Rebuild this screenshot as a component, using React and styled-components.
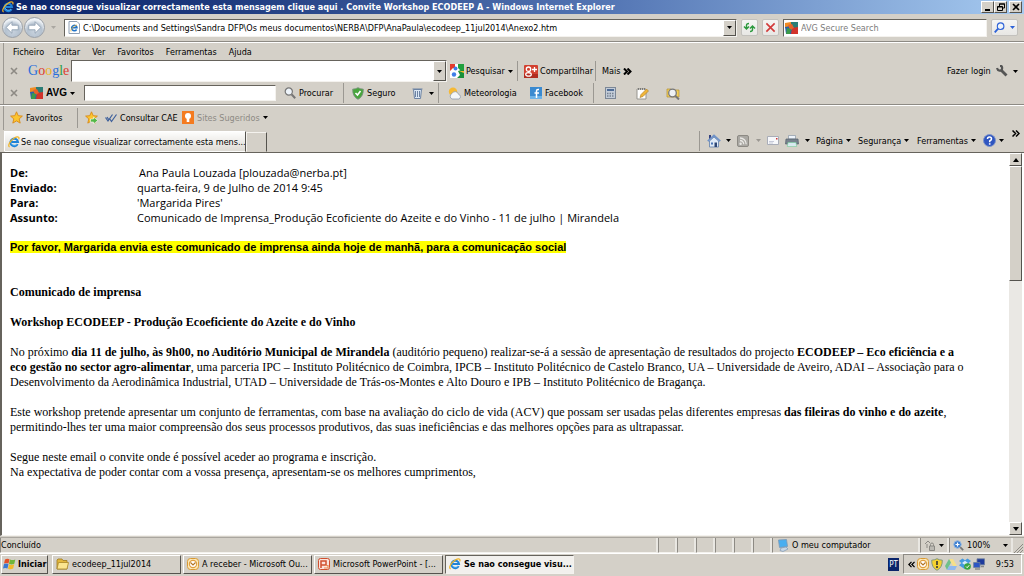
import React from "react";
import styled, { createGlobalStyle, css } from "styled-components";

const Global = createGlobalStyle`
  *, *::before, *::after { box-sizing: border-box; }
  html, body { margin: 0; padding: 0; }
  body {
    background: #d4d0c8;
    color: #000;
    font-family: "DejaVu Sans Condensed", "DejaVu Sans", sans-serif;
    font-size: 9px;
    line-height: 12px;
  }
  button, input { font: inherit; color: inherit; margin: 0; }
  p, h1, h2, dl, dd { margin: 0; }
  svg { display: block; flex: none; }
`;

const raised = css`
  border: 1px solid;
  border-color: #fff #55534e #55534e #fff;
`;
const sunken = css`
  border: 1px solid;
  border-color: #66635c #f4f2ee #f4f2ee #66635c;
`;

const Window = styled.div`
  display: flex;
  flex-direction: column;
  min-height: 100vh;
  background: #d4d0c8;
`;

const TitleBar = styled.header`
  display: flex;
  align-items: center;
  gap: 2px;
  height: 14px;
  padding: 0 2px;
  background: linear-gradient(90deg, #0a246a 0%, #1c387c 20%, #5577b5 60%, #a6caf0 100%);
  color: #fff;
`;
const Title = styled.h1`
  flex: 1;
  min-width: 0;
  font-size: 9px;
  line-height: 14px;
  font-weight: bold;
  white-space: nowrap;
  overflow: hidden;
`;
const WindowButtons = styled.div`
  display: flex;
  button:last-child { margin-left: 2px; }
`;
const WindowButton = styled.button`
  ${raised}
  display: grid;
  place-items: center;
  width: 13px;
  height: 12px;
  padding: 0;
  background: #d4d0c8;
`;

const AddressRow = styled.div`
  display: flex;
  align-items: center;
  gap: 4px;
  height: 28px;
  padding: 0 6px 0 2px;
  border-bottom: 1px solid #8d8a84;
`;
const Nav = styled.div`
  display: flex;
  align-items: center;
  width: 58px;
  gap: 1px;
`;
const NavButton = styled.button`
  display: grid;
  place-items: center;
  width: 21px;
  height: 21px;
  padding: 0;
  border: 1px solid #9aa0a8;
  border-radius: 50%;
  background: radial-gradient(circle at 50% 70%, #c9d3de 0, #b4c1cf 45%, #eef2f6 70%);
`;
const AddressBox = styled.div`
  ${sunken}
  display: flex;
  align-items: center;
  flex: 1;
  min-width: 0;
  height: 18px;
  padding-left: 3px;
  background: #fff;
`;
const PlainInput = styled.input`
  flex: 1;
  min-width: 0;
  height: 100%;
  padding: 0 0 0 3px;
  border: 0;
  outline: 0;
  background: transparent;
  &::placeholder { color: #7b7b7b; opacity: 1; }
`;
const DropButton = styled.button`
  ${raised}
  display: grid;
  place-items: center;
  align-self: stretch;
  width: 13px;
  padding: 0;
  background: #d4d0c8;
`;
const SmallButton = styled.button`
  display: flex;
  align-items: center;
  justify-content: space-around;
  width: ${(p) => p.$w || 17}px;
  height: 17px;
  padding: 0;
  border: 1px solid #c3c1bd;
  border-radius: 2px;
  background: linear-gradient(#f5f5f4, #e8e7e4);
`;
const SearchBox = styled(AddressBox)`
  flex: 0 0 204px;
  padding-left: 1px;
`;
const GoogleBox = styled(AddressBox)`
  flex: 0 0 376px;
  height: 22px;
  margin-right: 3px;
  padding-left: 0;
`;

const MenuRow = styled.nav`
  display: flex;
  align-items: center;
  gap: 12px;
  height: 18px;
  padding-left: 13px;
  border-top: 1px solid #fff;
  box-shadow: inset 3px 0 #d4d0c8, inset 4px 0 #9b9892;
`;
const MenuButton = styled.button`
  padding: 0;
  border: 0;
  background: none;
`;

const Toolbar = styled.div`
  display: flex;
  align-items: center;
  height: 22px;
  padding: 0 6px 0 10px;
  box-shadow: inset 3px 0 #d4d0c8, inset 4px 0 #9b9892;
`;
const Tool = styled.button`
  display: flex;
  align-items: center;
  flex: none;
  gap: ${(p) => p.$gap || 3}px;
  width: ${(p) => p.$w}px;
  padding: 0;
  border: 0;
  background: none;
  color: ${(p) => p.$color || "#000"};
  white-space: nowrap;
  > svg:last-child:not(:first-child) { margin-left: auto; }
`;
const Divider = styled.span`
  flex: none;
  width: 1px;
  height: 20px;
  margin: 0 ${(p) => p.$after || 7}px 0 ${(p) => p.$before || 5}px;
  background: #9b9892;
`;
const Push = styled.span`
  flex: 1;
`;
const Logo = styled.span`
  width: 43px;
  font: 14px/20px "Liberation Serif", serif;
`;
const Letter = styled.span`
  color: ${(p) => p.$c};
`;
const ToolInput = styled.input`
  ${sunken}
  width: 192px;
  height: 16px;
  margin: 0 8px 0 9px;
  padding: 0 3px;
  background: #fff;
  border-radius: 0;
  outline: 0;
`;
const AvgName = styled.b`
  font: bold 10px/12px "Liberation Sans", sans-serif;
`;
const FavoritesBar = styled(Toolbar)`
  height: 26px;
  border-top: 1px solid #8d8a84;
  box-shadow: inset 0 1px #fff, inset 3px 0 #d4d0c8, inset 4px 0 #9b9892;
`;

const TabRow = styled.div`
  display: flex;
  align-items: flex-end;
  height: 23px;
  padding: 0 3px 0 4px;
  border-bottom: 1px solid #66635c;
`;
const Tab = styled.button`
  display: flex;
  align-items: center;
  gap: 1px;
  width: 242px;
  height: 21px;
  padding: 0 0 0 3px;
  border: 1px solid;
  border-color: #fff #55534e transparent #fff;
  background: linear-gradient(#fdfdfc, #dedbd5);
  white-space: nowrap;
`;
const NewTab = styled.button`
  width: 21px;
  height: 20px;
  padding: 0;
  border: 1px solid;
  border-color: #f4f2ee #55534e transparent #f4f2ee;
  background: #d4d0c8;
`;
const CommandBar = styled.div`
  display: flex;
  align-items: center;
  gap: 6px;
  height: 23px;
`;
const More = styled(Tool)`
  align-self: flex-start;
  margin-left: 9px;
`;

const View = styled.div`
  display: flex;
  flex: 1;
  padding-right: 2px;
  background: #fff;
  border-left: 2px solid #66635c;
  border-bottom: 1px solid #f4f2ee;
`;
const Page = styled.main`
  flex: 1;
  min-width: 0;
  padding: 12px 36px 20px 8px;
  font-family: "Liberation Serif", serif;
  font-size: 12px;
  line-height: 15px;
`;
const Fields = styled.dl`
  display: grid;
  grid-template-columns: 127px 1fr;
  font-family: "Open Sans", sans-serif;
  font-size: 11px;
  dt { font-weight: bold; }
  dd:first-of-type { padding-left: 2px; }
`;
const Note = styled.p`
  padding-top: 15px;
  font-family: "Liberation Sans", sans-serif;
  font-size: 11px;
  font-weight: bold;
  mark {
    padding: 0;
    background: #ff0;
    color: inherit;
  }
`;
const Heading = styled.h2`
  padding-top: ${(p) => p.$top || 15}px;
  font-size: 12px;
  font-weight: bold;
`;
const Para = styled.p`
  padding-top: 15px;
`;
const Scrollbar = styled.div`
  display: flex;
  flex-direction: column;
  width: 13px;
  background: #eae8e4;
`;
const ScrollButton = styled.button`
  ${raised}
  display: grid;
  place-items: center;
  height: 13px;
  padding: 0;
  background: #d4d0c8;
`;
const Thumb = styled.div`
  ${raised}
  flex: 32;
  background: #d4d0c8;
`;
const Track = styled.div`
  flex: 68;
`;

const StatusBar = styled.footer`
  display: flex;
  height: 16px;
  margin-top: 1px;
  border-top: 1px solid #aaa69f;
`;
const Cell = styled.div`
  display: flex;
  align-items: center;
  gap: 3px;
  flex: ${(p) => (p.$w ? `0 0 ${p.$w}px` : "1")};
  padding-left: ${(p) => p.$pad || 0}px;
  border-left: 1px solid #8d8a84;
  border-right: 2px solid #e9e7e2;
  border-bottom: 1px solid #f4f2ee;
  white-space: nowrap;
  > svg:last-child:not(:first-child) { margin: 0 3px 0 auto; }
`;
const Grip = styled.div`
  display: flex;
  align-items: flex-end;
  width: 11px;
`;

const TaskBar = styled.nav`
  display: flex;
  align-items: center;
  gap: 2px;
  height: 23px;
  padding: 0 2px 2px 1px;
  border-top: 1px solid #fff;
`;
const Task = styled.button`
  ${(p) => (p.$active ? sunken : raised)}
  display: flex;
  align-items: center;
  gap: 3px;
  flex: 0 1 129px;
  min-width: 0;
  height: 19px;
  padding: 0 3px;
  background: ${(p) => (p.$active ? "#f2f0ed" : "#d4d0c8")};
  font-weight: ${(p) => (p.$active ? "bold" : "normal")};
  white-space: nowrap;
  overflow: hidden;
`;
const StartButton = styled(Task)`
  flex: 0 0 47px;
  gap: 2px;
  margin-right: 2px;
  padding: 0 1px;
  font-weight: bold;
`;
const Lang = styled.span`
  width: 11px;
  height: 13px;
  margin-right: 2px;
  background: #0a246a;
  color: #fff;
  text-align: center;
  line-height: 13px;
  font-size: 8px;
`;
const Tray = styled.div`
  ${sunken}
  display: flex;
  align-items: center;
  gap: 2px;
  width: 119px;
  height: 20px;
  padding: 0 7px 0 4px;
  border-color: #8d8a84 #fff #fff #8d8a84;
  time { margin-left: auto; }
`;

const Caret = ({ color = "#000" }) => (
  <svg width="5" height="3" viewBox="0 0 5 3">
    <path d="M0 0h5L2.5 3z" fill={color} />
  </svg>
);
const IE = () => (
  <svg width="12" height="12" viewBox="0 0 16 16" fill="none">
    <path d="M12.8 10.8A5 5 0 1 1 13.3 8H5" stroke="#1f83d8" strokeWidth="2.8" />
    <path d="M12 10.6A4.6 4.6 0 0 1 4 9" stroke="#6bc4f5" strokeWidth="1" />
    <path d="M2.2 14.8C-1 13 3 6 8 3s8-2 6.2 1.5" stroke="#f0b323" strokeWidth="1.6" />
  </svg>
);
const PageIE = () => (
  <svg width="12" height="13" viewBox="0 0 12 13" fill="none">
    <path d="M1 .5h8l2.5 2.5v9.5H1z" fill="#fff" stroke="#8fa0b4" />
    <path d="M8.6 8.5A2.7 2.7 0 1 1 9 6.800H4" stroke="#1f73c8" strokeWidth="1.5" />
    <path d="M3 10.5C2 9 5 5 9 4" stroke="#f0b323" strokeWidth=".7" />
  </svg>
);
const Arrow = ({ flip }) => (
  <svg width="15" height="15" viewBox="0 0 13 13">
    <path
      d={flip ? "M12 6.500L7 1.500v3H1.500v4H7v3z" : "M1 6.500l5-5v3h5.500v4H6v3z"}
      fill="#fff"
      stroke="#93a3b4"
      strokeWidth=".8"
    />
  </svg>
);
const Cross = ({ color, s = 8, w = 1.6 }) => (
  <svg width={s} height={s} viewBox="0 0 8 8">
    <path d="M1 1l6 6M7 1L1 7" stroke={color} strokeWidth={w} />
  </svg>
);
const Refresh = () => (
  <svg width="13" height="13" viewBox="0 0 13 13" fill="none" stroke="#2c9a3e" strokeWidth="1.4">
    <path d="M3.500 7.500V4.500Q3.500 2.500 6 2.500M1 5.500L3.500 8 6 5.500M9.500 5.500v3Q9.500 10.500 7 10.500M7 7.500L9.500 5 12 7.500" />
  </svg>
);
const Magnifier = ({ color = "#777", s = 12, left }) => (
  <svg width={s} height={s} viewBox="0 0 12 12" fill="none" stroke={color}>
    <g transform={left ? "translate(12 0) scale(-1 1)" : undefined}>
      <circle cx="4.8" cy="4.5" r="3.6" fill="#eef4fa" strokeWidth="1.2" />
      <path d="M7.500 7.200l3.700 4" strokeWidth="2" />
    </g>
  </svg>
);
const AvgIcon = () => (
  <svg width="13" height="12" viewBox="0 0 13 12">
    <path d="M0 1l6-1v6H0z" fill="#f08b22" />
    <path d="M6 0h7v6L9 7 6 5z" fill="#2c7d75" />
    <path d="M0 5l6-1 2 8H1z" fill="#2b5fa8" />
    <path d="M7 6l6-1v7H6z" fill="#d2332b" />
    <path d="M3 3l4-1 2 4-4 2z" fill="#e8622a" />
    <path d="M2 6l4 1-1 5H1z" fill="#3c9a4a" />
  </svg>
);
const GoogleG = () => (
  <svg width="14" height="14" viewBox="0 0 14 14">
    <path d="M0 0h14v14H0z" fill="#fff" />
    <path d="M0 0h5v4H3L0 7z" fill="#e33b2e" />
    <path d="M8 0h6v7h-3L8 4z" fill="#21a03d" />
    <path d="M8 7l3-1h3v8H7l3-3z" fill="#18903a" />
    <path d="M9 7h5v2z" fill="#f4b92a" />
    <circle cx="4" cy="10.5" r="2.2" fill="#3f7ee8" />
    <circle cx="5.5" cy="4.5" r="2" fill="#3f7ee8" />
  </svg>
);
const GPlus = () => (
  <svg width="14" height="13" viewBox="0 0 14 13" fill="none">
    <rect width="14" height="13" rx="1" fill="#d2402f" />
    <path d="M0 9h14v4H0z" fill="#b02c20" />
    <circle cx="4.5" cy="4.2" r="2.2" stroke="#fff" strokeWidth="1.3" />
    <ellipse cx="4.5" cy="9.4" rx="2.8" ry="1.8" stroke="#fff" strokeWidth="1.3" />
    <path d="M10.500 2v5M8 4.500h5" stroke="#fff" strokeWidth="1.3" />
  </svg>
);
const Wrench = () => (
  <svg width="12" height="12" viewBox="0 0 12 12" fill="none" stroke="#555">
    <path d="M5 5l5.500 5.500" strokeWidth="2.8" />
    <path d="M1 3c.5 3 4.500 3.500 5 1S5.500.8 4 .8" strokeWidth="2.2" />
  </svg>
);
const Shield = ({ color = "#48a63c", mark = "M3.500 6l2 2 3-4", ink = "#fff" }) => (
  <svg width="12" height="13" viewBox="0 0 12 13" fill="none">
    <path d="M6 .7Q8 2 11.300 2.200 11.500 9.500 6 12.300.5 9.500.7 2.200 4 2 6 .7z" fill={color} stroke="#76917a" strokeWidth=".9" />
    <path d={mark} stroke={ink} strokeWidth="1.6" />
  </svg>
);
const Trash = () => (
  <svg width="11" height="12" viewBox="0 0 11 12" fill="none" stroke="#6d83a3">
    <path d="M1.500 2.500h8l-1 9h-6z" fill="#dce8f5" />
    <path d="M.5 2h10M3.500 4v6M5.500 4v6M7.500 4v6" />
  </svg>
);
const Weather = () => (
  <svg width="14" height="13" viewBox="0 0 14 13">
    <circle cx="5" cy="4.8" r="4.2" fill="#f6b934" />
    <path d="M4 12a3 3 0 0 1 0-5.500 3.500 3.500 0 0 1 6.500.8A2.500 2.500 0 0 1 11 12z" fill="#f4f6f8" stroke="#8f9baa" strokeWidth=".8" />
  </svg>
);
const Facebook = () => (
  <svg width="12" height="12" viewBox="0 0 12 12" fill="none">
    <rect width="12" height="12" fill="#3a8ad0" />
    <path d="M0 9h12v3H0z" fill="#6db3e8" />
    <path d="M9 2.500H8Q6.500 2.500 6.500 4v7M4.500 6H9" stroke="#fff" strokeWidth="1.5" />
  </svg>
);
const Calc = () => (
  <svg width="11" height="12" viewBox="0 0 11 12">
    <rect x=".5" y=".5" width="10" height="11" fill="#c3ccd8" stroke="#7c8796" />
    <path d="M2 3h7" stroke="#4f6c95" strokeWidth="2" />
    <path d="M2 6.500h7M2 9h7" stroke="#76818f" strokeWidth="1.3" strokeDasharray="1.5 1" />
  </svg>
);
const NotePad = () => (
  <svg width="13" height="13" viewBox="0 0 13 13">
    <path d="M1 2h9v10H1z" fill="#fff" stroke="#97958f" />
    <path d="M2 2h8" stroke="#666" strokeWidth="1.5" strokeDasharray="1 1" />
    <path d="M4 10.500l1-3L10.500 2l2 2L7 9.500z" fill="#f1b638" stroke="#a87924" strokeWidth=".6" />
  </svg>
);
const FolderSearch = () => (
  <svg width="14" height="14" viewBox="0 0 14 14" fill="none">
    <path d="M1 3h4l1 1h7v7H1z" fill="#f3cf5a" stroke="#b39031" strokeWidth=".7" />
    <circle cx="6.5" cy="7" r="3.8" fill="#eef1f4" stroke="#777" strokeWidth="1.3" />
    <path d="M9.500 10l3.500 3.500" stroke="#777" strokeWidth="2" />
  </svg>
);
const Star = ({ plus }) => (
  <svg width="13" height="13" viewBox="0 0 13 13">
    <path d="M6.500.8l1.700 3.900 4.200.4-3.200 2.800 1 4.200-3.700-2.200-3.700 2.200 1-4.200L.6 5.100l4.200-.4z" fill="#fbc52f" stroke="#d98a19" strokeWidth=".9" />
    {plus && <path d="M5.500 8h3V6l4.300 3.500L8.500 13v-2h-3z" fill="#52b848" stroke="#fff" strokeWidth=".6" />}
  </svg>
);
const Checks = () => (
  <svg width="12" height="10" viewBox="0 0 12 10" fill="none" stroke="#3d5f9b" strokeWidth="1.2">
    <path d="M.5 4.500L3 8l4.500-6.500M4.500 5.500L6.500 8.500l5-7M2 4l2 3" />
  </svg>
);
const Bulb = () => (
  <svg width="12" height="13" viewBox="0 0 12 13">
    <rect width="12" height="13" fill="#f47b20" />
    <circle cx="6" cy="5" r="3" fill="#fff" />
    <path d="M4.700 7h2.600v4H4.700z" fill="#fff" />
  </svg>
);
const Home = () => (
  <svg width="14" height="14" viewBox="0 0 14 14">
    <path d="M2 1h2v4H2z" fill="#34407c" />
    <path d="M2.500 7L7 3l4.500 4v6h-9z" fill="#dfeaf7" stroke="#5f7fab" strokeWidth=".8" />
    <path d="M.8 7.200L7 1.500l6.200 5.700" fill="none" stroke="#6f92c8" strokeWidth="1.7" />
    <path d="M7.500 8.500h2.500V13H7.500z" fill="#2d4674" />
    <path d="M4 8.500h2v2H4z" fill="#4a74b5" />
  </svg>
);
const Rss = () => (
  <svg width="12" height="12" viewBox="0 0 12 12" fill="none" stroke="#e9e8e5" strokeWidth="1.3">
    <rect x=".5" y=".5" width="11" height="11" rx="1.5" fill="#aaa8a3" stroke="#8d8a84" strokeWidth="1" />
    <path d="M3 5.500a3.700 3.700 0 0 1 3.700 3.700M3 3a6.200 6.200 0 0 1 6.200 6.200" />
    <circle cx="3.6" cy="8.7" r=".6" />
  </svg>
);
const Mail = () => (
  <svg width="12" height="9" viewBox="0 0 12 9" fill="none">
    <path d="M.5.500h11v8H.5z" fill="#f7f8fb" stroke="#a9adb8" />
    <path d="M2 5.500h5M2 7h4" stroke="#b9bed0" strokeWidth=".8" />
    <path d="M9 2h1.500v1.500H9z" fill="#c33" />
  </svg>
);
const Printer = () => (
  <svg width="14" height="12" viewBox="0 0 14 12">
    <path d="M3.500.500h7V4h-7z" fill="#eef4fb" stroke="#8b98a6" strokeWidth=".7" />
    <path d="M1 4h12l.5 5H.5z" fill="#77828e" stroke="#55606b" strokeWidth=".7" />
    <path d="M3 7.500h8l.7 4H2.300z" fill="#d7eaf0" stroke="#7c9" strokeWidth=".6" />
  </svg>
);
const Help = () => (
  <svg width="13" height="13" viewBox="0 0 13 13" fill="none">
    <circle cx="6.5" cy="6.5" r="6" fill="#2f55c0" stroke="#7d93c8" />
    <path d="M4.500 5Q4.500 3 6.500 3T8.500 5Q8.500 6 6.700 7v1.200" stroke="#fff" strokeWidth="1.5" />
    <path d="M5.900 9.200h1.600v1.500H5.900z" fill="#fff" />
  </svg>
);
const Computer = () => (
  <svg width="12" height="13" viewBox="0 0 12 13">
    <path d="M1.500 1l8-.5 1 7-8 1z" fill="#49aef0" stroke="#7a97b5" strokeWidth=".8" />
    <path d="M4 9l5-1 2 2-5 2.500-3-1z" fill="#c9d6e4" stroke="#7a97b5" strokeWidth=".7" />
  </svg>
);
const LockIcon = () => (
  <svg width="12" height="12" viewBox="0 0 12 12" fill="none" stroke="#8b8984">
    <path d="M1 5l3-3 2 2M3 5v4" />
    <path d="M5.500 7h5v4.500h-5z" fill="#bbb9b3" />
    <path d="M6.500 7V5.500a1.500 1.500 0 0 1 3 0V7" />
  </svg>
);
const ZoomIcon = () => (
  <svg width="11" height="11" viewBox="0 0 11 11" fill="none">
    <circle cx="4.5" cy="4.5" r="3.7" fill="#3b7ed0" stroke="#8fb4de" />
    <path d="M4.500 2.500v4M2.500 4.500h4" stroke="#fff" strokeWidth="1.2" />
    <path d="M7.200 7.200l3 3" stroke="#777" strokeWidth="1.8" />
  </svg>
);
const Windows = () => (
  <svg width="13" height="12" viewBox="0 0 13 12">
    <path d="M2 1.500Q4 0 6.500 1.200L5.500 5.500Q3.500 4.300 1 5.500z" fill="#e4512b" />
    <path d="M7 1.500Q9.500 2.700 12.300 1.500L11.300 5.800Q8.500 7 6 5.800z" fill="#6fb53a" />
    <path d="M1 6Q3 4.800 5.500 6l-1 4.500Q2 9.500 0 10.500z" fill="#3a78d2" />
    <path d="M6 6.300q2.500 1.200 5.200 0l-1 4.300Q7.500 12 5 10.700z" fill="#f2b92c" />
  </svg>
);
const Folder = () => (
  <svg width="13" height="12" viewBox="0 0 13 12">
    <path d="M1 2l1-1h4l1 1.500h4V11H1z" fill="#e3b73c" stroke="#9c7a20" strokeWidth=".8" />
    <path d="M1 11l1.500-6.500h10L11 11z" fill="#fbe58f" stroke="#a98728" strokeWidth=".8" />
  </svg>
);
const Outlook = () => (
  <svg width="12" height="12" viewBox="0 0 12 12" fill="none">
    <rect x=".5" y=".5" width="11" height="11" rx="3" fill="#fde9b8" stroke="#d99a35" />
    <circle cx="6" cy="6" r="3.6" fill="#fff" stroke="#e0a040" strokeWidth="1.2" />
    <path d="M3.500 4.500l2.500 2.500 2.500-2.500" stroke="#b37420" strokeWidth="1.1" />
  </svg>
);
const PowerPoint = () => (
  <svg width="12" height="12" viewBox="0 0 12 12" fill="none">
    <rect x=".5" y=".5" width="11" height="11" rx="2" fill="#fbe3dc" stroke="#d1502f" />
    <path d="M3 10V3h5v4H3" stroke="#d1502f" strokeWidth="1.5" />
    <path d="M7 7.500h3V10H6" stroke="#e88a55" strokeWidth="1.2" />
  </svg>
);
const Drive = () => (
  <svg width="12" height="11" viewBox="0 0 12 11">
    <path d="M4 0h4l4 7H8z" fill="#f6e08a" />
    <path d="M4 0l2 3.500L2 11 0 7z" fill="#6fc08b" />
    <path d="M4 7h8l-2 4H2z" fill="#8fb8f0" />
  </svg>
);
const Dropbox = () => (
  <svg width="12" height="12" viewBox="0 0 12 12">
    <path d="M3.500.500L6 2.300 8.500.500 12 3 9.500 5 12 7.200 6 11.300 0 7.200 2.500 5 0 3z" fill="#459be0" />
    <path d="M6 2.800L9 5 6 7 3 5z" fill="#d7ecfb" />
    <circle cx="8.5" cy="8.5" r="3.3" fill="#39a53d" />
    <path d="M7 8.500l1.200 1.200 2-2.400" stroke="#fff" fill="none" />
  </svg>
);
const Network = () => (
  <svg width="12" height="12" viewBox="0 0 12 12" stroke="#6f7f9c" strokeWidth=".8">
    <path d="M4 .8h7.500v6H4z" fill="#1e3a9c" />
    <path d="M.6 4.500H7v5H.6z" fill="#2c55c4" />
    <path d="M2 11h5M8 8.500h3" stroke="#888" strokeWidth="1.4" />
  </svg>
);
const Tri = ({ up }) => (
  <svg width="6" height="4" viewBox="0 0 6 4">
    <path d={up ? "M0 4h6L3 0z" : "M0 0h6L3 4z"} />
  </svg>
);
const Chevrons = ({ left, s = 8, w = 1.5 }) => (
  <svg width={s} height="7" viewBox="0 0 8 7" fill="none" stroke="#000" strokeWidth={w}>
    <path d={left ? "M4 .5l-3 3 3 3M7.500.500l-3 3 3 3" : "M.5.500l3 3-3 3M4 .5l3 3-3 3"} />
  </svg>
);

const menus = ["Ficheiro", "Editar", "Ver", "Favoritos", "Ferramentas", "Ajuda"];
const google = [["G", "#2a6fdb"], ["o", "#dd3b2f"], ["o", "#efb21e"], ["g", "#2a6fdb"], ["l", "#2a9d47"], ["e", "#dd3b2f"]];

export default function App() {
  return (
    <Window>
      <Global />
      <TitleBar>
        <IE />
        <Title>Se nao consegue visualizar correctamente esta mensagem clique aqui . Convite Workshop ECODEEP A - Windows Internet Explorer</Title>
        <WindowButtons>
          <WindowButton aria-label="Minimizar">
            <svg width="8" height="8"><path d="M1 6h5v2H1z" /></svg>
          </WindowButton>
          <WindowButton aria-label="Restaurar">
            <svg width="8" height="8" fill="none" stroke="#000"><path d="M2.500 3V1h5v4H6M2 1h6M.5 3.500h5v4h-5zM.5 4h5" /></svg>
          </WindowButton>
          <WindowButton aria-label="Fechar"><Cross color="#000" /></WindowButton>
        </WindowButtons>
      </TitleBar>

      <AddressRow>
        <Nav>
          <NavButton aria-label="Retroceder"><Arrow /></NavButton>
          <NavButton aria-label="Avançar"><Arrow flip /></NavButton>
          <Push />
          <Caret color="#aaa7a1" />
          <Push />
        </Nav>
        <AddressBox>
          <PageIE />
          <PlainInput aria-label="Endereço" defaultValue="C:\Documents and Settings\Sandra DFP\Os meus documentos\NERBA\DFP\AnaPaula\ecodeep_11jul2014\Anexo2.htm" />
          <DropButton aria-label="Mostrar endereços"><Caret /></DropButton>
        </AddressBox>
        <SmallButton aria-label="Actualizar"><Refresh /></SmallButton>
        <SmallButton aria-label="Parar"><Cross color="#d23b3b" s={11} w={1.2} /></SmallButton>
        <SearchBox>
          <AvgIcon />
          <PlainInput aria-label="Procurar" placeholder="AVG Secure Search" />
        </SearchBox>
        <SmallButton $w={27} aria-label="Procurar na Web">
          <Magnifier color="#2d62d8" s={11} left />
          <Caret color="#2d62d8" />
        </SmallButton>
      </AddressRow>

      <MenuRow>
        {menus.map((m) => <MenuButton key={m}>{m}</MenuButton>)}
      </MenuRow>

      <Toolbar>
        <Tool $w={18} aria-label="Fechar barra Google"><Cross color="#8d8a84" /></Tool>
        <Logo>
          {google.map(([ch, c], i) => <Letter key={i} $c={c}>{ch}</Letter>)}
        </Logo>
        <GoogleBox>
          <PlainInput aria-label="Pesquisa Google" />
          <DropButton aria-label="Histórico"><Caret /></DropButton>
        </GoogleBox>
        <Tool $w={63} $gap={2}><GoogleG />Pesquisar<Caret /></Tool>
        <Divider $before={4} $after={6} />
        <Tool $w={69} $gap={2}><GPlus />Compartilhar</Tool>
        <Divider $before={2} $after={6} />
        <Tool $w={30}>Mais<Chevrons s={9} w={2} /></Tool>
        <Push />
        <Tool $w={49}>Fazer login</Tool>
        <Tool $w={22} aria-label="Opções"><Wrench /><Caret /></Tool>
      </Toolbar>

      <Toolbar>
        <Tool $w={20} aria-label="Fechar barra AVG"><Cross color="#8d8a84" /></Tool>
        <Tool $w={45}><AvgIcon /><AvgName>AVG</AvgName><Caret /></Tool>
        <ToolInput aria-label="Pesquisa AVG" />
        <Tool $w={54}><Magnifier />Procurar</Tool>
        <Divider $after={8} />
        <Tool $w={60}><Shield />Seguro</Tool>
        <Tool $w={22} aria-label="Limpar"><Trash /><Caret /></Tool>
        <Divider $before={4} $after={9} />
        <Tool $w={82} $gap={2}><Weather />Meteorologia</Tool>
        <Tool $w={58}><Facebook />Facebook</Tool>
        <Divider $after={11} />
        <Tool $w={31} aria-label="Calculadora"><Calc /></Tool>
        <Tool $w={30} aria-label="Bloco de notas"><NotePad /></Tool>
        <Tool $w={14} aria-label="Explorador"><FolderSearch /></Tool>
      </Toolbar>

      <FavoritesBar>
        <Tool $w={60}><Star />Favoritos</Tool>
        <Divider $before={7} />
        <Tool $w={20} aria-label="Adicionar aos favoritos"><Star plus /></Tool>
        <Tool $w={77}><Checks />Consultar CAE</Tool>
        <Tool $w={83} $color="#8d8a84"><Bulb />Sites Sugeridos<Caret /></Tool>
      </FavoritesBar>

      <TabRow>
        <Tab><IE />Se nao consegue visualizar correctamente esta mens...</Tab>
        <NewTab aria-label="Novo separador" />
        <Push />
        <CommandBar>
          <Divider $after={1} />
          <Tool $w={24} aria-label="Home page"><Home /><Caret /></Tool>
          <Tool $w={24} aria-label="Feeds"><Rss /><Caret color="#9b9892" /></Tool>
          <Tool $w={12} aria-label="Ler correio"><Mail /></Tool>
          <Tool $w={25} aria-label="Imprimir"><Printer /><Caret /></Tool>
          <Tool $w={36}>Página<Caret /></Tool>
          <Tool $w={53}>Segurança<Caret /></Tool>
          <Tool $w={60}>Ferramentas<Caret /></Tool>
          <Tool $w={20} aria-label="Ajuda"><Help /><Caret /></Tool>
        </CommandBar>
        <More $w={9} aria-label="Mais comandos"><Chevrons /></More>
      </TabRow>

      <View>
        <Page>
          <Fields>
            <dt>De:</dt><dd>Ana Paula Louzada [plouzada@nerba.pt]</dd>
            <dt>Enviado:</dt><dd>quarta-feira, 9 de Julho de 2014 9:45</dd>
            <dt>Para:</dt><dd>'Margarida Pires'</dd>
            <dt>Assunto:</dt><dd>Comunicado de Imprensa_Produção Ecoficiente do Azeite e do Vinho - 11 de julho | Mirandela</dd>
          </Fields>
          <Note><mark>Por favor, Margarida envia este comunicado de imprensa ainda hoje de manhã, para a comunicação social</mark></Note>
          <Heading $top={30}>Comunicado de imprensa</Heading>
          <Heading>Workshop ECODEEP - Produção Ecoeficiente do Azeite e do Vinho</Heading>
          <Para>
            No próximo <b>dia 11 de julho, às 9h00, no Auditório Municipal de Mirandela</b> (auditório pequeno) realizar-se-á a sessão de apresentação de resultados do projecto <b>ECODEEP – Eco eficiência e a eco gestão no sector agro-alimentar</b>, uma parceria IPC – Instituto Politécnico de Coimbra, IPCB – Instituto Politécnico de Castelo Branco, UA – Universidade de Aveiro, ADAI – Associação para o Desenvolvimento da Aerodinâmica Industrial, UTAD – Universidade de Trás-os-Montes e Alto Douro e IPB – Instituto Politécnico de Bragança.
          </Para>
          <Para>
            Este workshop pretende apresentar um conjunto de ferramentas, com base na avaliação do ciclo de vida (ACV) que possam ser usadas pelas diferentes empresas <b>das fileiras do vinho e do azeite</b>, permitindo-lhes ter uma maior compreensão dos seus processos produtivos, das suas ineficiências e das melhores opções para as ultrapassar.
          </Para>
          <Para>
            Segue neste email o convite onde é possível aceder ao programa e inscrição.<br />
            Na expectativa de poder contar com a vossa presença, apresentam-se os melhores cumprimentos,
          </Para>
        </Page>
        <Scrollbar>
          <ScrollButton aria-label="Subir"><Tri up /></ScrollButton>
          <Thumb />
          <Track />
          <ScrollButton aria-label="Descer"><Tri /></ScrollButton>
        </Scrollbar>
      </View>

      <StatusBar>
        <Cell>Concluído</Cell>
        {[0, 1, 2, 3, 4, 5].map((i) => <Cell key={i} $w={19} />)}
        <Cell $w={148} $pad={4}><Computer />O meu computador</Cell>
        <Cell $w={29} $pad={3}><LockIcon /><Caret /></Cell>
        <Cell $w={64} $pad={3}><ZoomIcon />100%<Caret /></Cell>
        <Grip>
          <svg width="10" height="10" stroke="#8d8a84"><path d="M1 10l9-9M4 10l6-6M7 10l3-3" /></svg>
        </Grip>
      </StatusBar>

      <TaskBar>
        <StartButton><Windows />Iniciar</StartButton>
        <Task><Folder />ecodeep_11jul2014</Task>
        <Task><Outlook />A receber - Microsoft Ou...</Task>
        <Task><PowerPoint />Microsoft PowerPoint - [...</Task>
        <Task $active><IE />Se nao consegue visu...</Task>
        <Push />
        <Lang>PT</Lang>
        <Tray>
          <Chevrons left s={7} />
          <Outlook />
          <Shield color="#f5d22e" mark="M6 3v4M6 8v2" ink="#333" />
          <Drive />
          <Dropbox />
          <Network />
          <time>9:53</time>
        </Tray>
      </TaskBar>
    </Window>
  );
}
